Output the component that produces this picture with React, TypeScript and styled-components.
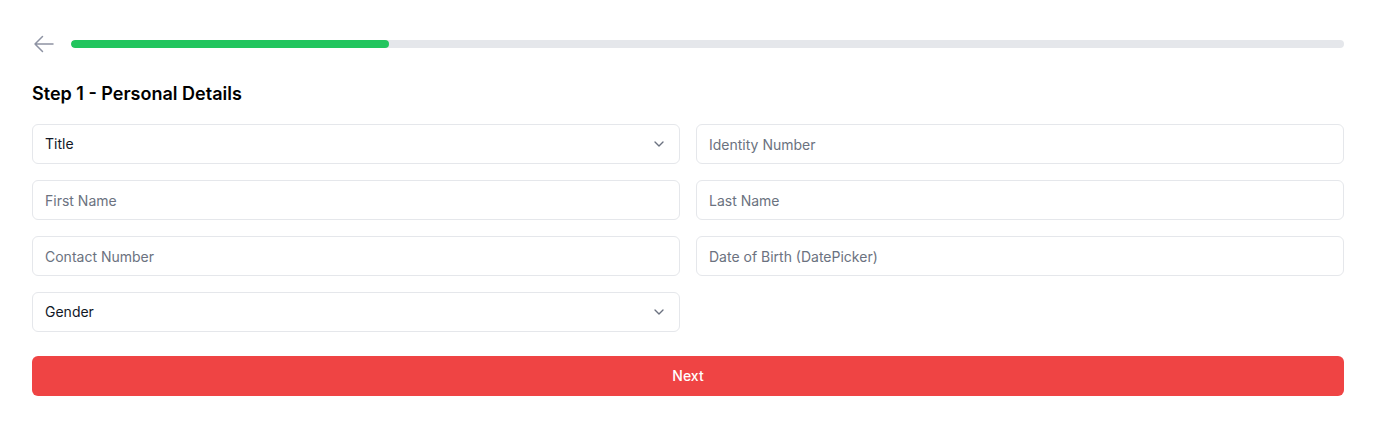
import React from "react";
import styled, { createGlobalStyle } from "styled-components";

const Global = createGlobalStyle`
  * { box-sizing: border-box; }
  body {
    margin: 0;
    background: #ffffff;
    font-family: Inter, "Noto Sans", sans-serif;
    color: #111827;
  }
`;

const Page = styled.div`
  padding: 32px;
  display: flex;
  flex-direction: column;
`;

const TopBar = styled.div`
  display: flex;
  align-items: center;
  gap: 15px;
  height: 24px;
`;

const BackButton = styled.button`
  display: flex;
  align-items: center;
  justify-content: center;
  padding: 0;
  border: none;
  background: none;
  color: #8e93a3;
  width: 24px;
  height: 24px;
  cursor: pointer;
`;

const Track = styled.div`
  flex: 1;
  height: 8px;
  border-radius: 9999px;
  background: #e5e7eb;
  overflow: hidden;
`;

const Fill = styled.div`
  height: 100%;
  border-radius: 9999px;
  background: #22c55e;
`;

const Heading = styled.h2`
  margin: 24px 0 16px;
  font-size: 18px;
  line-height: 28px;
  font-weight: 600;
  color: #000;
`;

const Grid = styled.div`
  display: grid;
  grid-template-columns: 1fr 1fr;
  gap: 16px;
`;

const Field = styled.div<{ $select?: boolean }>`
  height: 40px;
  border: 1px solid #e5e7eb;
  border-radius: 6px;
  display: flex;
  align-items: center;
  justify-content: space-between;
  padding: ${(p) => (p.$select ? "0 12px 1px 12px" : "0 12px")};
  font-size: 14px;
  color: ${(p) => (p.$select ? "#111827" : "#6b7280")};
  background: #fff;
`;

const Chevron = styled.span`
  display: flex;
  color: #6b7280;
  margin-top: 1px;
`;

const NextButton = styled.button`
  margin-top: 24px;
  height: 40px;
  width: 100%;
  border: none;
  border-radius: 6px;
  background: #ef4444;
  color: #fff;
  font-family: Inter, "Noto Sans", sans-serif;
  font-size: 14px;
  font-weight: 500;
  padding: 0 0 1px;
  cursor: pointer;
`;

const ArrowLeft = () => (
  <svg width="24" height="24" viewBox="0 0 24 24" fill="none" stroke="currentColor" strokeWidth="1.5" strokeLinecap="round" strokeLinejoin="round">
    <path d="M10.5 19.5L3 12m0 0l7.5-7.5M3 12h18" />
  </svg>
);

const ChevronDown = () => (
  <svg width="16" height="16" viewBox="0 0 24 24" fill="none" stroke="currentColor" strokeWidth="2" strokeLinecap="round" strokeLinejoin="round">
    <path d="M6 9l6 6 6-6" />
  </svg>
);

type F = { label: string; select?: boolean } | null;

const fields: F[] = [
  { label: "Title", select: true },
  { label: "Identity Number" },
  { label: "First Name" },
  { label: "Last Name" },
  { label: "Contact Number" },
  { label: "Date of Birth (DatePicker)" },
  { label: "Gender", select: true },
  null,
];

export default function App() {
  const progress = 25;
  return (
    <>
      <Global />
      <Page>
        <TopBar>
          <BackButton aria-label="Back">
            <ArrowLeft />
          </BackButton>
          <Track>
            <Fill style={{ width: `${progress}%` }} />
          </Track>
        </TopBar>
        <Heading>Step 1 - Personal Details</Heading>
        <Grid>
          {fields.map((f, i) =>
            f ? (
              <Field key={i} $select={f.select}>
                <span>{f.label}</span>
                {f.select && (
                  <Chevron>
                    <ChevronDown />
                  </Chevron>
                )}
              </Field>
            ) : (
              <div key={i} />
            )
          )}
        </Grid>
        <NextButton>Next</NextButton>
      </Page>
    </>
  );
}
